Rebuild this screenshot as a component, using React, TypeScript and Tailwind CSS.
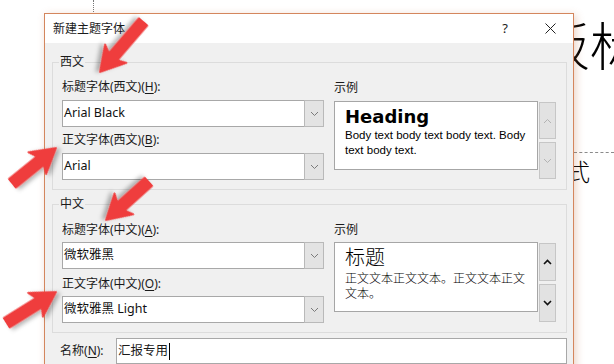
import clsx from 'clsx'

type ComboProps = {
  value: string
  className?: string
}

function Chevron({ up, color = '#6b6b6b', width = 1 }: { up?: boolean; color?: string; width?: number }) {
  return (
    <svg width="9" height="6" viewBox="0 0 9 6" fill="none">
      <polyline
        points={up ? '1,5 4.5,1.5 8,5' : '1,1 4.5,4.5 8,1'}
        stroke={color}
        strokeWidth={width}
      />
    </svg>
  )
}

function Combo({ value, className }: ComboProps) {
  return (
    <div className={clsx('flex h-[27px]', className)}>
      <div className="flex flex-1 items-center border border-[#a8a8a8] bg-white pl-px text-[12.5px] text-[#111]">
        {value}
      </div>
      <div className="-ml-px flex w-[20px] items-center justify-center border border-[#b9b9b9] bg-[#e3e3e3]">
        <Chevron color="#7a7a7a" />
      </div>
    </div>
  )
}

function ScrollButtons({ enabled, h }: { enabled?: boolean; h: string }) {
  const color = enabled ? '#111' : '#b3b3b3'
  const w = enabled ? 1.6 : 1
  return (
    <div className="ml-px mt-px flex flex-col gap-[3px]">
      <div className={clsx('flex w-[17px] items-center justify-center border border-[#c6c6c6] bg-[#e2e2e2]', h)}>
        <Chevron up color={color} width={w} />
      </div>
      <div className={clsx('flex w-[17px] items-center justify-center border border-[#c6c6c6] bg-[#e2e2e2]', h)}>
        <Chevron color={color} width={w} />
      </div>
    </div>
  )
}

function Mnemonic({ text, letter }: { text: string; letter: string }) {
  return (
    <span>
      {text}(<span className="underline underline-offset-2">{letter}</span>):
    </span>
  )
}

const arrows = [
  { x: 100, y: 72, a: 130.7, l: 66 },
  { x: 56, y: 148, a: -39, l: 56 },
  { x: 106, y: 220, a: 138, l: 57 },
  { x: 56, y: 292, a: -32, l: 58 },
]

export default function App() {
  return (
    <div className="relative h-[364px] w-[614px] overflow-hidden bg-white font-['Noto_Sans','Noto_Sans_CJK_SC',sans-serif] text-[12px] text-[#1a1a1a]">
      {/* slide behind the dialog */}
      <div className="absolute left-[93px] top-0 h-[12px] border-l border-dotted border-[#777]" />
      <div className="absolute left-[538px] top-[18px] whitespace-nowrap font-['Noto_Sans_CJK_SC',sans-serif] text-[52px] font-light leading-none text-black">
        板标
      </div>
      <div className="absolute left-[574px] top-[152px] w-[40px] border-t border-dashed border-[#8a8a8a]" />
      <div className="absolute left-[566px] top-[159px] whitespace-nowrap font-['Noto_Sans_CJK_SC',sans-serif] text-[24px] font-light leading-none text-black">
        式
      </div>

      {/* dialog window */}
      <div className="absolute left-[44px] top-[13px] flex h-[360px] w-[530px] flex-col border border-[#d4865d] bg-[#f0f0f0] shadow-[2px_2px_8px_rgba(190,110,70,0.3)]">
        <div className="flex h-[29px] items-center bg-white pl-[8px] pr-[17px]">
          <span className="flex-1">新建主题字体</span>
          <span className="mr-[37px] text-[13px]">?</span>
          <svg width="11" height="11" viewBox="0 0 11 11">
            <path d="M0.5 0.5 L10.5 10.5 M10.5 0.5 L0.5 10.5" stroke="#222" strokeWidth="1" />
          </svg>
        </div>

        <div className="flex flex-col pl-[7px] pr-[6px] pt-[19px]">
          {/* 西文 group */}
          <div className="border border-[#dcdcdc]">
            <div className="-mt-[9px] ml-[6px] w-fit bg-[#f0f0f0] px-[1px] leading-4">西文</div>
            <div className="mt-[9px] flex pb-[9px] pl-[9px] pr-[10px]">
              <div className="flex w-[262px] flex-col">
                <div className="leading-4"><Mnemonic text="标题字体(西文)" letter="H" /></div>
                <Combo value="Arial Black" className="mt-[5px]" />
                <div className="mt-[5px] leading-4"><Mnemonic text="正文字体(西文)" letter="B" /></div>
                <Combo value="Arial" className="mt-[5px]" />
              </div>
              <div className="ml-[10px] flex flex-col">
                <div className="mt-px leading-4">示例</div>
                <div className="mt-[5px] flex items-start">
                  <div className="h-[69px] w-[204px] border border-[#a6a6a6] bg-white pl-[10px] pr-[8px] pt-[4px] text-black">
                    <div className="font-['DejaVu_Sans',sans-serif] text-[18px] font-bold leading-[22px]">Heading</div>
                    <div className="font-['Liberation_Sans',Arial,sans-serif] text-[11.5px] leading-[15px]">
                      Body text body text body text. Body text body text.
                    </div>
                  </div>
                  <ScrollButtons h="h-[37px]" />
                </div>
              </div>
            </div>
          </div>

          {/* 中文 group */}
          <div className="mt-[14px] border border-[#dcdcdc]">
            <div className="-mt-[9px] ml-[6px] w-fit bg-[#f0f0f0] px-[1px] leading-4">中文</div>
            <div className="mt-[10px] flex pb-[9px] pl-[9px] pr-[10px]">
              <div className="flex w-[262px] flex-col">
                <div className="leading-4"><Mnemonic text="标题字体(中文)" letter="A" /></div>
                <Combo value="微软雅黑" className="mt-[4px]" />
                <div className="mt-[7px] leading-4"><Mnemonic text="正文字体(中文)" letter="O" /></div>
                <Combo value="微软雅黑 Light" className="mt-[4px]" />
              </div>
              <div className="ml-[10px] flex flex-col">
                <div className="leading-4">示例</div>
                <div className="mt-[4px] flex items-start">
                  <div className="h-[70px] w-[204px] border border-[#a6a6a6] bg-white pl-[10px] pr-[10px] pt-px font-['Noto_Sans_CJK_SC',sans-serif] text-black">
                    <div className="text-[20px] font-light leading-[26px]">标题</div>
                    <div className="text-[12px] font-light leading-[15px]">正文文本正文文本。正文文本正文文本。</div>
                  </div>
                  <ScrollButtons enabled h="h-[38px]" />
                </div>
              </div>
            </div>
          </div>

          {/* name row */}
          <div className="mt-[5px] flex items-start">
            <div className="ml-[8px] mt-[5px] w-[56px] leading-4"><Mnemonic text="名称" letter="N" /></div>
            <div className="flex h-[26px] flex-1 items-center border border-[#a8a8a8] bg-white pl-px text-[12.5px]">
              汇报专用
              <span className="ml-px h-[17px] w-px bg-black" />
            </div>
          </div>
        </div>
      </div>

      {/* red annotation arrows */}
      <svg className="pointer-events-none absolute inset-0" width="614" height="364">
        <defs>
          <filter id="sh" x="-30%" y="-30%" width="160%" height="160%">
            <feDropShadow dx="2" dy="3" stdDeviation="2" floodColor="#000" floodOpacity="0.3" />
          </filter>
        </defs>
        {arrows.map((ar, i) => (
          <path
            key={i}
            transform={`translate(${ar.x} ${ar.y}) rotate(${ar.a})`}
            d={`M0 0 L-24 -14 L-20 -5.5 L-${ar.l} -5.5 L-${ar.l} 5.5 L-20 5.5 L-24 14 Z`}
            fill="#ef3e3e"
            stroke="#ef3e3e"
            strokeWidth="2"
            strokeLinejoin="round"
            filter="url(#sh)"
          />
        ))}
      </svg>
    </div>
  )
}
